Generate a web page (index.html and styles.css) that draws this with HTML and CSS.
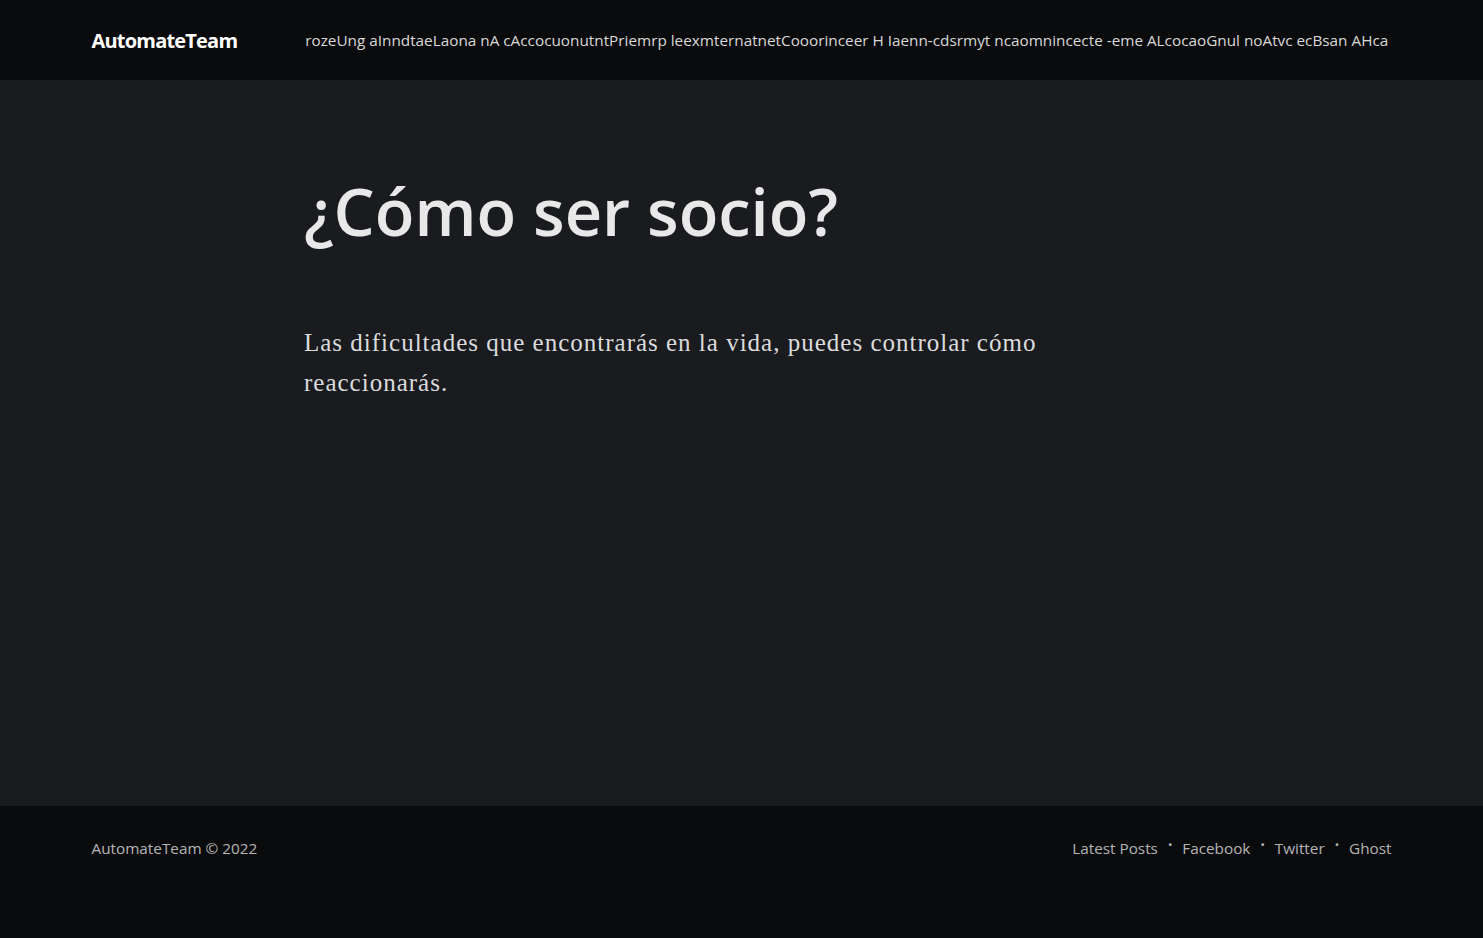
FILE: index.html
```html
<!DOCTYPE html>
<html lang="es">
<head>
<meta charset="utf-8">
<title>¿Cómo ser socio?</title>
<link rel="stylesheet" href="styles.css">
</head>
<body>
<header class="site-head">
  <div class="head-inner">
    <a class="logo" href="#">AutomateTeam</a>
    <nav class="nav">rozeUng aInndtaeLaona nA cAccocuonutntPriemrp leexmternatnetCooorinceer H Iaenn-cdsrmyt ncaomnincecte -eme ALcocaoGnul noAtvc ecBsan AHca</nav>
  </div>
</header>
<main class="main">
  <article class="article">
    <h1 class="title">¿Cómo ser socio?</h1>
    <p class="text">Las dificultades que encontrarás en la vida, puedes controlar cómo reaccionarás.</p>
  </article>
</main>
<footer class="site-foot">
  <div class="foot-inner">
    <span class="copy">AutomateTeam © 2022</span>
    <nav class="foot-nav">
      <a href="#">Latest Posts</a>
      <a href="#">Facebook</a>
      <a href="#">Twitter</a>
      <a href="#">Ghost</a>
    </nav>
  </div>
</footer>
</body>
</html>
```
FILE: styles.css
```css
* { box-sizing: border-box; }
html, body { margin: 0; padding: 0; }
body {
  background: #191b1f;
  color: rgba(255,255,255,0.85);
  font-family: "Open Sans", "Noto Sans", sans-serif;
  min-height: 938px;
  display: flex;
  flex-direction: column;
}
a { color: inherit; text-decoration: none; }

.site-head {
  background: #0a0b0c;
  height: 80px;
}
.head-inner {
  max-width: 1300px;
  margin: 0 auto;
  height: 100%;
  display: flex;
  align-items: center;
  gap: 68px;
}
.logo {
  color: #fff;
  font-weight: 700;
  font-size: 20px;
  letter-spacing: -0.8px;
  white-space: nowrap;
}
.nav {
  flex: 1;
  overflow: hidden;
  white-space: nowrap;
  font-size: 15.3px;
  color: rgba(255,255,255,0.85);
}

.main {
  flex: 1;
  height: 726px;
}
.article {
  width: 780px;
  margin-left: 304px;
  padding-top: 92px;
}
.title {
  margin: 0;
  font-size: 65px;
  font-weight: 600;
  line-height: 1.2;
  letter-spacing: 0;
  color: #e8e8e8;
}
.text {
  margin: 73px 0 0;
  font-family: "Liberation Serif", "DejaVu Serif", serif;
  font-size: 25px;
  letter-spacing: 1px;
  line-height: 40px;
  color: rgba(255,255,255,0.85);
}

.site-foot {
  background: #0a0b0c;
  height: 132px;
}
.foot-inner {
  max-width: 1300px;
  margin: 0 auto;
  display: flex;
  justify-content: space-between;
  padding-top: 32px;
  font-size: 15.3px;
  color: rgba(255,255,255,0.7);
}
.foot-nav { display: flex; }
.foot-nav a + a::before {
  content: "·";
  display: inline-block;
  margin: 0 10px;
  position: relative;
  top: -4px;
  font-weight: 700;
}
```
